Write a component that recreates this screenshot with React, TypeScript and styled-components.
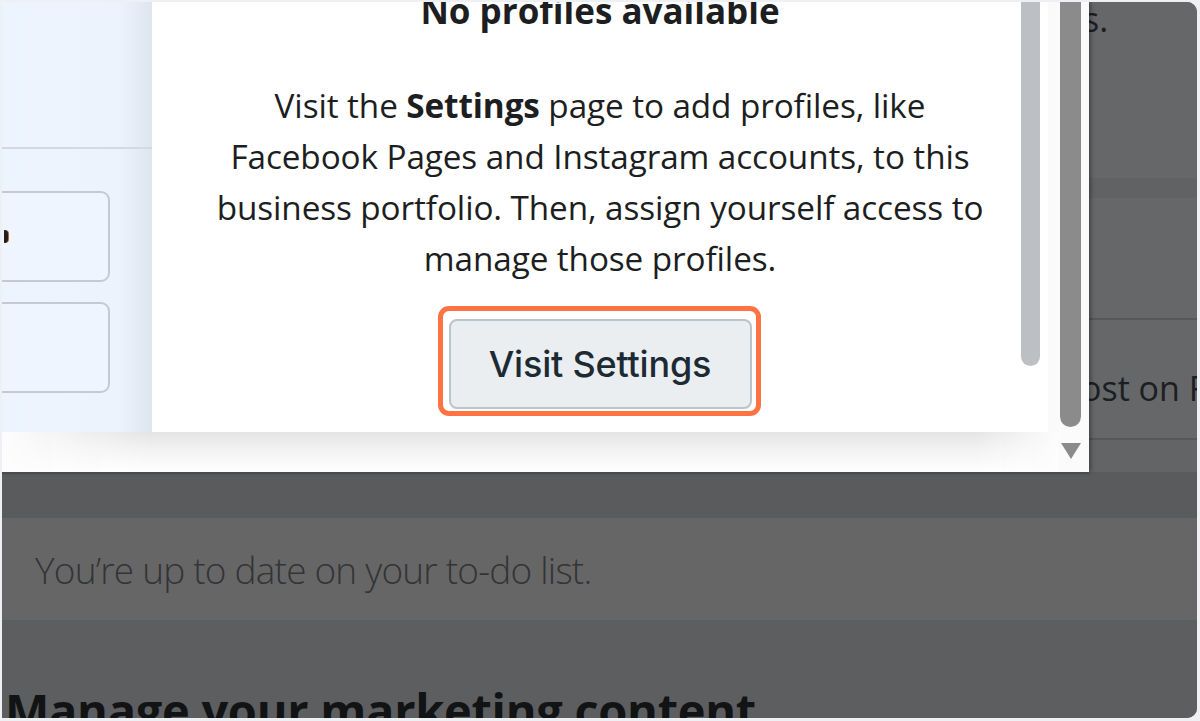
import React from "react";
import styled, { createGlobalStyle } from "styled-components";

const GlobalStyle = createGlobalStyle`
  html, body {
    margin: 0;
    padding: 0;
    background: #eef0f4;
  }
  body {
    font-family: "Open Sans", "Noto Sans", sans-serif;
  }
`;

const Frame = styled.div`
  width: 1200px;
  height: 721px;
  padding: 2px 3px 3px 2px;
  box-sizing: border-box;
`;

const Screen = styled.div`
  width: 100%;
  height: 100%;
  border-radius: 0 10px 10px 0;
  overflow: hidden;
  background: #5e5f61;
  display: flex;
  flex-direction: column;
`;

const TopRow = styled.div`
  display: flex;
  height: 470px;
  flex-shrink: 0;
`;

const Popup = styled.div`
  flex: 0 0 1087px;
  display: flex;
  background: #fdfdfd;
  box-shadow: 0 2px 0 #4a4b4d, 2px 0 4px rgba(0, 0, 0, 0.35);
  position: relative;
  z-index: 1;
`;

const Main = styled.div`
  flex: 1;
  display: flex;
  flex-direction: column;
`;

const Body = styled.div`
  height: 430px;
  display: flex;
  background: #fafafa;
`;

const LeftPanel = styled.div`
  flex: 0 0 150px;
  background: linear-gradient(90deg, #ecf4fe 0%, #ecf3fd 78%, #dde5ee 100%);
  display: flex;
  flex-direction: column;
`;

const PanelTop = styled.div`
  height: 145px;
  border-bottom: 2px solid #d3d9e0;
`;

const CardList = styled.div`
  display: flex;
  flex-direction: column;
  gap: 20px;
  padding-top: 42px;
  margin-left: -20px;
`;

const Card = styled.div`
  width: 104px;
  height: 87px;
  border: 2px solid #c3cad3;
  border-radius: 9px;
  background: #eef5fe;
  display: flex;
  align-items: center;
  padding-left: 20px;
  box-sizing: content-box;
`;

const Glyph = styled.span`
  width: 4px;
  height: 13px;
  border-radius: 0 6px 6px 0;
  background: #1c1e21;
  box-shadow: 1px 0 0 #b9651c;
`;

const Content = styled.div`
  flex: 0 0 896px;
  background: #ffffff;
  position: relative;
  overflow: hidden;
  display: flex;
  flex-direction: column;
  align-items: center;
  color: #1c1e21;
`;

const Heading = styled.h2`
  margin: -13px 0 0;
  font-size: 35px;
  line-height: 44px;
  font-weight: 700;
  color: #1c1e21;
`;

const Message = styled.p`
  margin: 47px 0 0;
  font-size: 33.3px;
  line-height: 51px;
  text-align: center;
  color: #1c1e21;
  letter-spacing: -0.1px;

  strong {
    font-weight: 700;
  }
`;

const Highlight = styled.div`
  margin-top: 22px;
  margin-left: -2px;
  padding: 8px 4px 2px 6px;
  border: 5px solid #ff7343;
  border-radius: 11px;
  display: flex;
`;

const SettingsButton = styled.button`
  width: 303px;
  height: 90px;
  border: 2px solid #bcc3cb;
  border-radius: 8px;
  background: #ebeef1;
  color: #1c2b33;
  font-family: Inter, "Noto Sans", sans-serif;
  font-size: 36px;
  font-weight: 500;
  letter-spacing: -0.2px;
  cursor: pointer;
`;

const InnerThumb = styled.div`
  position: absolute;
  top: 0;
  right: 8px;
  width: 19px;
  height: 364px;
  background: #bcc0c4;
  border-radius: 0 0 10px 10px;
`;

const FooterShade = styled.div`
  flex: 1;
  background: linear-gradient(180deg, #e4e4e4 0%, #f2f2f2 45%, #ffffff 100%);
  mask-image: linear-gradient(90deg, transparent 0%, #000 14%, #000 92%, transparent 100%);
  -webkit-mask-image: linear-gradient(90deg, transparent 0%, #000 14%, #000 92%, transparent 100%);
`;

const OuterScroll = styled.div`
  flex: 0 0 30px;
  display: flex;
  flex-direction: column;
  align-items: flex-start;
  background: #fbfbfb;
`;

const OuterThumb = styled.div`
  width: 21px;
  height: 425px;
  margin-left: 1px;
  background: #8b8b8b;
  border-radius: 0 0 11px 11px;
`;

const ArrowDown = styled.div`
  margin-top: 16px;
  margin-left: 2px;
  width: 0;
  height: 0;
  border-left: 10px solid transparent;
  border-right: 10px solid transparent;
  border-top: 16px solid #8b8b8b;
`;

const Aside = styled.div`
  flex: 1;
  display: flex;
  flex-direction: column;
  background: #666768;
  overflow: hidden;
  color: #1b1f24;
  font-size: 34px;
  white-space: nowrap;
`;

const AsideBlock = styled.div<{ $h: number; $pad?: number; $line?: boolean }>`
  height: ${(p) => p.$h}px;
  flex-shrink: 0;
  box-sizing: border-box;
  padding-top: ${(p) => p.$pad ?? 0}px;
  border-bottom: ${(p) => (p.$line ? "2px solid #565759" : "none")};
  display: flex;
  align-items: center;
`;

const AsideText = styled.span<{ $shift: number }>`
  margin-left: ${(p) => p.$shift}px;
  line-height: 1;
`;

const Band = styled.div<{ $h: number; $bg: string }>`
  height: ${(p) => p.$h}px;
  flex-shrink: 0;
  background: ${(p) => p.$bg};
`;

const TodoRow = styled.div`
  height: 102px;
  flex-shrink: 0;
  background: #666666;
  display: flex;
  align-items: center;
  padding-left: 33px;
  font-family: "Open Sans", sans-serif;
  font-weight: 300;
  font-size: 37px;
  letter-spacing: -0.8px;
  color: #333436;
`;

const Section = styled.div`
  flex: 1;
  background: #5d5e60;
  padding: 62px 0 0 3px;
  overflow: hidden;
`;

const SectionTitle = styled.h1`
  margin: 0;
  font-size: 47px;
  line-height: 56px;
  font-weight: 700;
  color: #121314;
  letter-spacing: -0.3px;
  white-space: nowrap;
`;

export default function App() {
  return (
    <>
      <GlobalStyle />
      <Frame>
        <Screen>
          <TopRow>
            <Popup>
              <Main>
                <Body>
                  <LeftPanel>
                    <PanelTop />
                    <CardList>
                      <Card>
                        <Glyph />
                      </Card>
                      <Card />
                    </CardList>
                  </LeftPanel>
                  <Content>
                    <Heading>No profiles available</Heading>
                    <Message>
                      Visit the <strong>Settings</strong> page to add profiles, like
                      <br />
                      Facebook Pages and Instagram accounts, to this
                      <br />
                      business portfolio. Then, assign yourself access to
                      <br />
                      manage those profiles.
                    </Message>
                    <Highlight>
                      <SettingsButton>Visit Settings</SettingsButton>
                    </Highlight>
                    <InnerThumb />
                  </Content>
                </Body>
                <FooterShade />
              </Main>
              <OuterScroll>
                <OuterThumb />
                <ArrowDown />
              </OuterScroll>
            </Popup>
            <Aside>
              <AsideBlock $h={34}>
                <AsideText $shift={-6}>s.</AsideText>
              </AsideBlock>
              <Band $h={142} $bg="#666768" />
              <Band $h={20} $bg="#616264" />
              <AsideBlock $h={122} $line />
              <AsideBlock $h={120} $pad={18} $line>
                <AsideText $shift={-8}>ost on Facebook</AsideText>
              </AsideBlock>
              <Band $h={40} $bg="#636466" />
            </Aside>
          </TopRow>
          <Band $h={46} $bg="#5a5b5d" />
          <TodoRow>You’re up to date on your to-do list.</TodoRow>
          <Section>
            <SectionTitle>Manage your marketing content</SectionTitle>
          </Section>
        </Screen>
      </Frame>
    </>
  );
}
